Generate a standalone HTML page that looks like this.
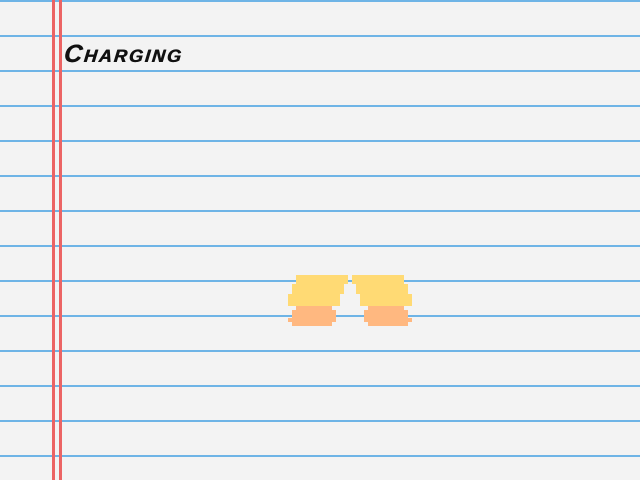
<!DOCTYPE html>
<html><head><style>
body{margin:0;width:640px;height:480px;overflow:hidden;background:#f3f3f3;position:relative;
background-image:repeating-linear-gradient(to bottom,#6eb4e6 0,#6eb4e6 2px,transparent 2px,transparent 35px);background-position:0 0}
.r{position:absolute;top:0;height:480px;width:3px;background:#ec6464}
.b{position:absolute}
.y{background:#ffda74}.o{background:#ffb880}
.t{position:absolute;left:64px;top:40px;font:italic bold 25px "Liberation Sans",sans-serif;font-variant:small-caps;letter-spacing:2px;color:#111;transform:skewX(-6deg);text-shadow:0.6px 0 0 #111}
</style></head><body>
<div class="r" style="left:52px"></div><div class="r" style="left:59px"></div>
<div class="t">Charging</div>
<div class="b y" style="left:296px;top:275px;width:52px;height:9px"></div>
<div class="b y" style="left:292px;top:284px;width:52px;height:10px"></div>
<div class="b y" style="left:288px;top:294px;width:52px;height:12px"></div>
<div class="b o" style="left:296px;top:306px;width:36px;height:4px"></div>
<div class="b o" style="left:292px;top:310px;width:44px;height:12px"></div>
<div class="b o" style="left:288px;top:318px;width:4px;height:4px"></div>
<div class="b o" style="left:292px;top:322px;width:40px;height:4px"></div>
<div class="b y" style="left:352px;top:275px;width:52px;height:9px"></div>
<div class="b y" style="left:356px;top:284px;width:52px;height:10px"></div>
<div class="b y" style="left:360px;top:294px;width:52px;height:12px"></div>
<div class="b o" style="left:368px;top:306px;width:36px;height:4px"></div>
<div class="b o" style="left:364px;top:310px;width:44px;height:12px"></div>
<div class="b o" style="left:408px;top:318px;width:4px;height:4px"></div>
<div class="b o" style="left:368px;top:322px;width:40px;height:4px"></div>
</body></html>
